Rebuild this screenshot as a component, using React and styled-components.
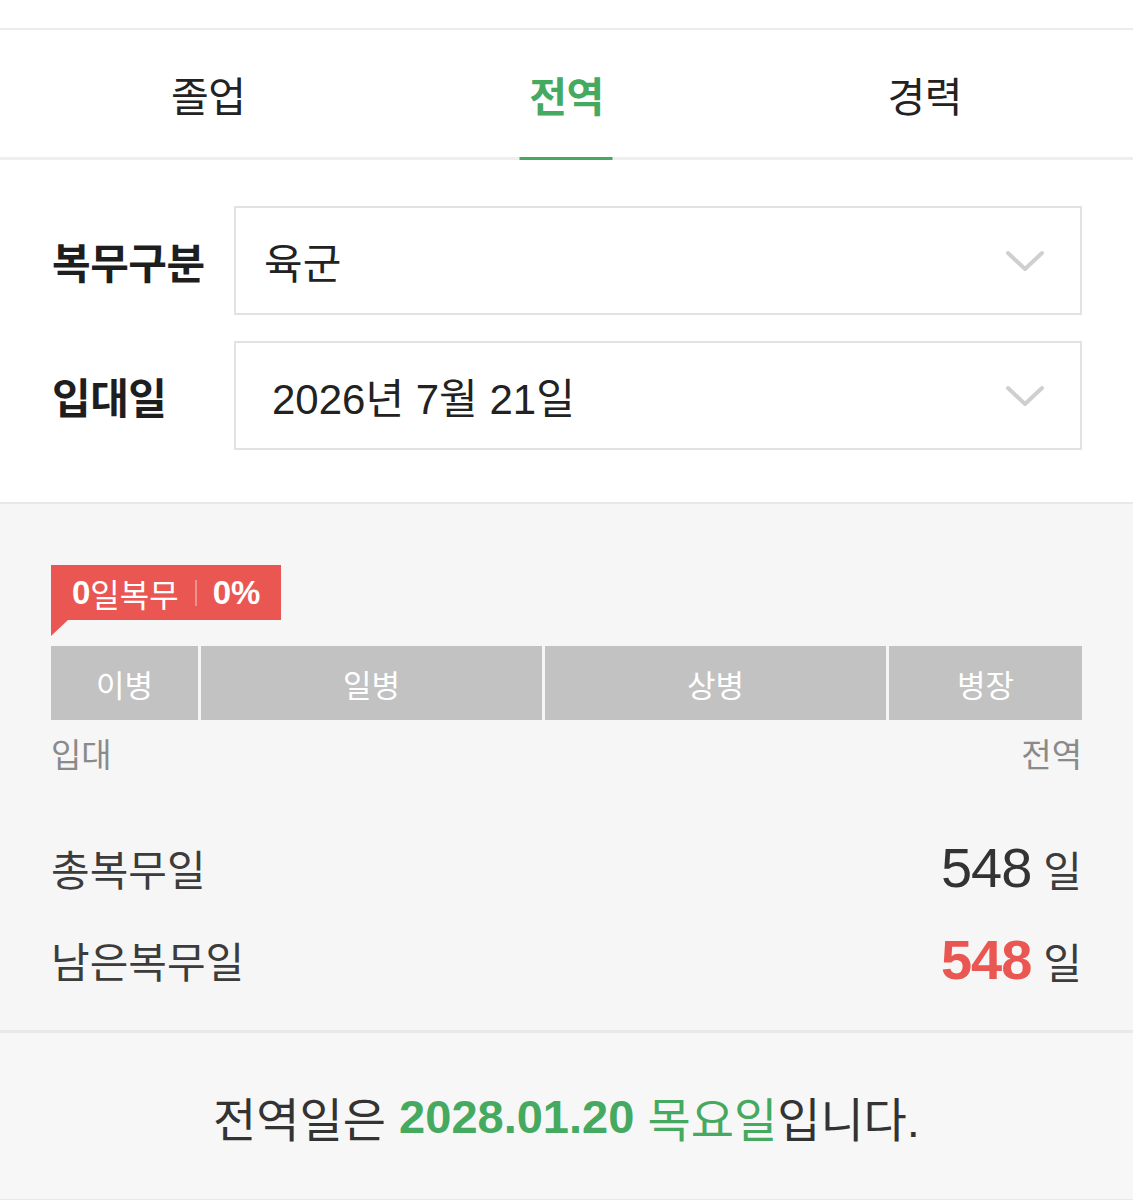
import React from "react";
import styled, { createGlobalStyle } from "styled-components";

const FONT = `"Liberation Sans", "Noto Sans CJK KR", "Noto Sans", sans-serif`;
const GREEN = "#45a95f";
const RED = "#ea5651";

const Global = createGlobalStyle`
  * { box-sizing: border-box; }
  html, body { margin: 0; padding: 0; background: #fff; }
  body { font-family: ${FONT}; color: #222; }
`;

const Page = styled.div`
  width: 1133px;
  display: flex;
  flex-direction: column;
`;

const TopSpacer = styled.div`
  height: 30px;
  border-bottom: 2px solid #ececec;
  background: #fff;
`;

const Tabs = styled.nav`
  display: grid;
  grid-template-columns: repeat(3, 1fr);
  padding: 0 29px;
  height: 130px;
  border-bottom: 3px solid #eeeeee;
  background: #fff;
`;

const Tab = styled.div`
  position: relative;
  display: flex;
  align-items: center;
  justify-content: center;
  font-size: 41px;
  font-weight: ${(p) => (p.$active ? 700 : 400)};
  color: ${(p) => (p.$active ? GREEN : "#222")};
  letter-spacing: -0.5px;
  &::after {
    content: "";
    display: ${(p) => (p.$active ? "block" : "none")};
    position: absolute;
    left: 50%;
    transform: translateX(-50%);
    bottom: -3px;
    width: 93px;
    height: 3px;
    background: ${GREEN};
  }
`;

const Form = styled.section`
  padding: 46px 51px 52px 52px;
  display: flex;
  flex-direction: column;
  gap: 26px;
  background: #fff;
  border-bottom: 2px solid #e8e8e8;
`;

const FieldRow = styled.div`
  display: flex;
  align-items: center;
`;

const FieldLabel = styled.div`
  width: 182px;
  font-size: 42px;
  font-weight: 700;
  color: #1e1e1e;
  letter-spacing: -0.5px;
`;

const SelectBox = styled.div`
  flex: 1;
  height: 109px;
  border: 2px solid #e2e2e2;
  display: flex;
  align-items: center;
  justify-content: space-between;
  padding: 0 36px 0 ${(p) => p.$inset}px;
  font-size: 42px;
  color: #222;
`;

const Chevron = () => (
  <svg width="38" height="22" viewBox="0 0 38 22" fill="none">
    <path d="M2 3 L19 19 L36 3" stroke="#cfcfcf" strokeWidth="4" strokeLinecap="round" strokeLinejoin="round" />
  </svg>
);

const Progress = styled.section`
  background: #f6f6f6;
  padding: 61px 51px 25px 51px;
  border-bottom: 3px solid #e9e9e9;
  display: flex;
  flex-direction: column;
`;

const Badge = styled.div`
  position: relative;
  align-self: flex-start;
  height: 55px;
  padding: 0 21px;
  background: ${RED};
  color: #fff;
  display: flex;
  align-items: center;
  font-size: 32px;
  margin-bottom: 26px;
  &::after {
    content: "";
    position: absolute;
    left: 0;
    top: 100%;
    border-top: 16px solid ${RED};
    border-right: 17px solid transparent;
  }
`;

const BadgeStrong = styled.b`
  font-weight: 700;
  font-size: 33px;
`;

const BadgeDivider = styled.span`
  display: inline-block;
  width: 2px;
  height: 26px;
  margin: 0 16px;
  background: rgba(255, 255, 255, 0.35);
`;

const Bar = styled.div`
  display: flex;
  gap: 3px;
  height: 74px;
`;

const Segment = styled.div`
  flex: ${(p) => p.$grow} 1 0;
  background: #c2c2c2;
  color: #fff;
  font-size: 31px;
  display: flex;
  align-items: center;
  justify-content: center;
`;

const Ends = styled.div`
  display: flex;
  justify-content: space-between;
  margin-top: 16px;
  font-size: 33px;
  line-height: 40px;
  color: #8a8a8a;
`;

const Stats = styled.div`
  margin-top: 45px;
  display: flex;
  flex-direction: column;
`;

const StatRow = styled.div`
  height: 92px;
  display: flex;
  align-items: center;
  justify-content: space-between;
`;

const StatLabel = styled.div`
  font-size: 42px;
  color: #3c3c3c;
`;

const StatValue = styled.div`
  display: flex;
  align-items: baseline;
  gap: 12px;
`;

const Number = styled.span`
  font-size: 56px;
  font-weight: ${(p) => (p.$accent ? 700 : 400)};
  color: ${(p) => (p.$accent ? RED : "#333")};
  letter-spacing: -1px;
`;

const Unit = styled.span`
  font-size: 42px;
  color: #3c3c3c;
`;

const Summary = styled.section`
  background: #f7f7f7;
  height: 169px;
  border-bottom: 3px solid #e9e9e9;
  display: flex;
  align-items: center;
  justify-content: center;
  font-size: 47px;
  color: #333;
`;

const Green = styled.span`
  color: ${GREEN};
  font-weight: ${(p) => (p.$bold ? 700 : 400)};
`;

const segments = [
  { name: "이병", grow: 147 },
  { name: "일병", grow: 341 },
  { name: "상병", grow: 341 },
  { name: "병장", grow: 193 },
];

export default function App() {
  return (
    <Page>
      <Global />
      <TopSpacer />
      <Tabs>
        <Tab>졸업</Tab>
        <Tab $active>전역</Tab>
        <Tab>경력</Tab>
      </Tabs>
      <Form>
        <FieldRow>
          <FieldLabel>복무구분</FieldLabel>
          <SelectBox $inset={28}>
            <span>육군</span>
            <Chevron />
          </SelectBox>
        </FieldRow>
        <FieldRow>
          <FieldLabel>입대일</FieldLabel>
          <SelectBox $inset={36}>
            <span>2026년 7월 21일</span>
            <Chevron />
          </SelectBox>
        </FieldRow>
      </Form>
      <Progress>
        <Badge>
          <BadgeStrong>0</BadgeStrong>일복무
          <BadgeDivider />
          <BadgeStrong>0%</BadgeStrong>
        </Badge>
        <Bar>
          {segments.map((s) => (
            <Segment key={s.name} $grow={s.grow}>
              {s.name}
            </Segment>
          ))}
        </Bar>
        <Ends>
          <span>입대</span>
          <span>전역</span>
        </Ends>
        <Stats>
          <StatRow>
            <StatLabel>총복무일</StatLabel>
            <StatValue>
              <Number>548</Number>
              <Unit>일</Unit>
            </StatValue>
          </StatRow>
          <StatRow>
            <StatLabel>남은복무일</StatLabel>
            <StatValue>
              <Number $accent>548</Number>
              <Unit>일</Unit>
            </StatValue>
          </StatRow>
        </Stats>
      </Progress>
      <Summary>
        전역일은&nbsp;<Green $bold>2028.01.20</Green>&nbsp;<Green>목요일</Green>입니다.
      </Summary>
    </Page>
  );
}
